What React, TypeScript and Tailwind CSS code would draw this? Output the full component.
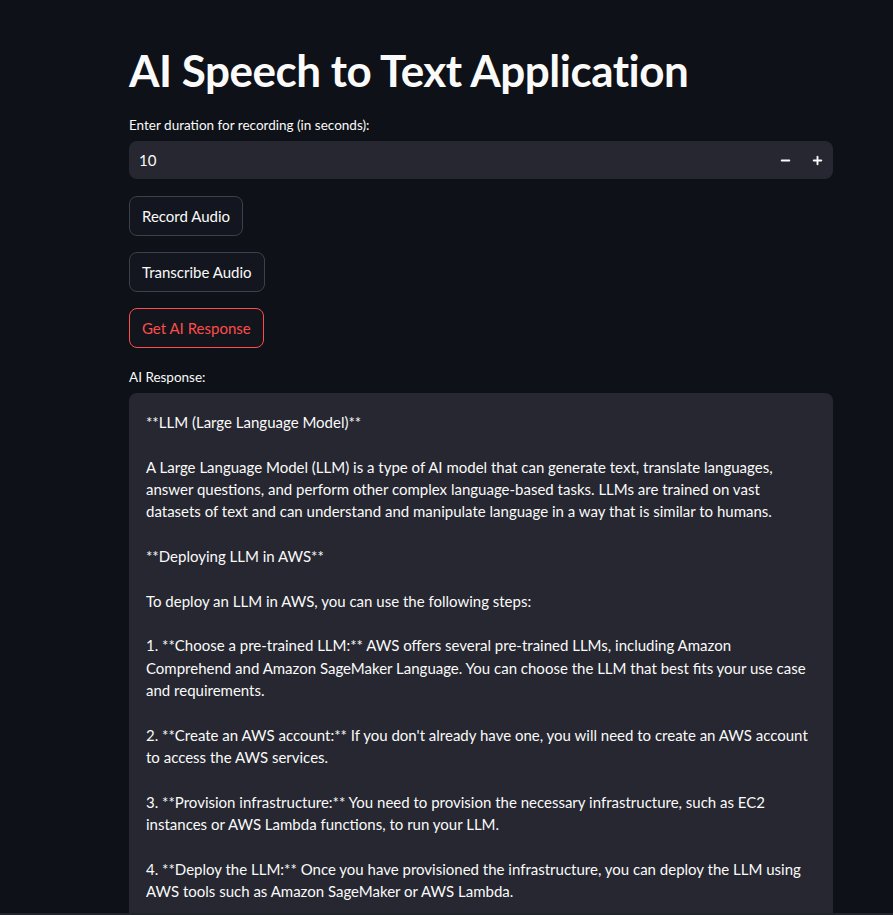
import { Minus, Plus } from 'lucide-react';

const responseLines: string[] = [
  '**LLM (Large Language Model)**',
  '',
  'A Large Language Model (LLM) is a type of AI model that can generate text, translate languages,',
  'answer questions, and perform other complex language-based tasks. LLMs are trained on vast',
  'datasets of text and can understand and manipulate language in a way that is similar to humans.',
  '',
  '**Deploying LLM in AWS**',
  '',
  'To deploy an LLM in AWS, you can use the following steps:',
  '',
  '1. **Choose a pre-trained LLM:** AWS offers several pre-trained LLMs, including Amazon',
  'Comprehend and Amazon SageMaker Language. You can choose the LLM that best fits your use case',
  'and requirements.',
  '',
  "2. **Create an AWS account:** If you don't already have one, you will need to create an AWS account",
  'to access the AWS services.',
  '',
  '3. **Provision infrastructure:** You need to provision the necessary infrastructure, such as EC2',
  'instances or AWS Lambda functions, to run your LLM.',
  '',
  '4. **Deploy the LLM:** Once you have provisioned the infrastructure, you can deploy the LLM using',
  'AWS tools such as Amazon SageMaker or AWS Lambda.',
];

function ActionButton({ label, active }: { label: string; active?: boolean }) {
  return (
    <button
      className={
        active
          ? 'h-10 px-3 rounded-lg border border-[#ff4b4b] text-[#ff4b4b] bg-[#12151c] text-[15px] leading-none'
          : 'h-10 px-3 rounded-lg border border-[#3d4048] text-[#fafafa] bg-[#13161e] text-[15px] leading-none'
      }
    >
      {label}
    </button>
  );
}

export default function App() {
  return (
    <div
      className="h-[915px] flex flex-col bg-[#0e1117] text-[#fafafa] overflow-hidden"
      style={{ fontFamily: 'Lato, "Noto Sans", sans-serif' }}
    >
      <div className="flex-1 min-h-0 pl-[129px] pt-[44px]">
        <div className="w-[704px] flex flex-col h-full">
          <h1 className="text-[44px] font-bold leading-[52px] tracking-[-0.5px]">AI Speech to Text Application</h1>

          <label className="mt-[21px] text-[13.5px] leading-4">Enter duration for recording (in seconds):</label>
          <div className="mt-[8px] h-[38px] rounded-lg bg-[#262730] flex items-center pl-[10px]">
            <span className="flex-1 text-[15px]">10</span>
            <div className="flex items-center h-full">
              <span className="w-8 h-full flex items-center justify-center">
                <Minus size={13} strokeWidth={3.5} />
              </span>
              <span className="w-8 h-full flex items-center justify-center">
                <Plus size={13} strokeWidth={3.5} />
              </span>
            </div>
          </div>

          <div className="mt-[17px] flex flex-col items-start gap-4">
            <ActionButton label="Record Audio" />
            <ActionButton label="Transcribe Audio" />
            <ActionButton label="Get AI Response" active />
          </div>

          <label className="mt-[21px] text-[13.5px] leading-4">AI Response:</label>
          <div className="mt-[8px] flex-1 min-h-0 rounded-t-lg bg-[#262730] pl-[17px] pt-[18px] overflow-hidden">
            {responseLines.map((line, i) => (
              <div key={i} className="h-[22.35px] leading-[22.35px] text-[15px] whitespace-nowrap">
                {line}
              </div>
            ))}
          </div>
        </div>
      </div>
      <div className="h-[2px] bg-[#22252c]" />
    </div>
  );
}
